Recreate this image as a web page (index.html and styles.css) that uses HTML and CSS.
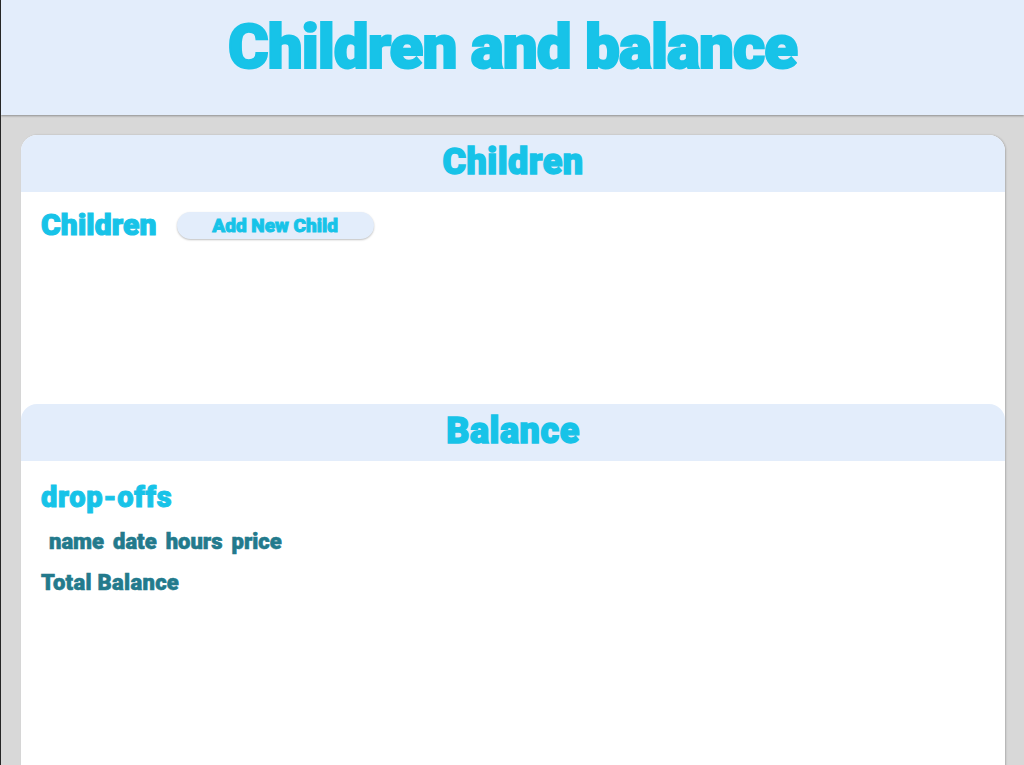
FILE: index.html
```html
<!DOCTYPE html>
<html lang="en">
<head>
<meta charset="utf-8">
<title>Children and balance</title>
<link rel="stylesheet" href="styles.css">
</head>
<body>
<header class="top">
  <h1 class="top-title">Children and balance</h1>
</header>
<main class="main">
  <div class="card">
    <section class="section section-children">
      <h2 class="section-head">Children</h2>
      <div class="section-body">
        <div class="row">
          <h3 class="sub-title">Children</h3>
          <button class="pill-btn" type="button">Add New Child</button>
        </div>
      </div>
    </section>
    <section class="section section-balance">
      <h2 class="section-head">Balance</h2>
      <div class="section-body balance-body">
        <h3 class="drop-title">drop-offs</h3>
        <div class="cols">
          <span class="col">name</span>
          <span class="col">date</span>
          <span class="col">hours</span>
          <span class="col">price</span>
        </div>
        <p class="total">Total Balance</p>
      </div>
    </section>
  </div>
</main>
</body>
</html>
```

FILE: styles.css
```css
html, body {
  margin: 0;
  padding: 0;
}
body {
  background: #d8d8d8;
  border-left: 1px solid #262626;
  font-family: "Roboto Black", Roboto, "Liberation Sans", sans-serif;
  height: 765px;
  overflow: hidden;
  box-sizing: border-box;
}
.top {
  height: 115px;
  box-sizing: border-box;
  background: #e3edfb;
  box-shadow: 0 1px 2px rgba(0, 0, 0, 0.35);
  padding-top: 15px;
  position: relative;
  z-index: 1;
}
.top-title {
  margin: 0;
  text-align: center;
  font-size: 62px;
  line-height: 64px;
  font-weight: 900;
  letter-spacing: -1px;
  -webkit-text-stroke: 2px #17c3e8;
  color: #17c3e8;
}
.main {
  padding: 20px 19px 0 20px;
}
.card {
  background: #fff;
  border-radius: 16px 16px 0 0;
  min-height: 640px;
  box-shadow: 1px 0 2px rgba(0, 0, 0, 0.2);
}
.section-head {
  margin: 0;
  height: 57px;
  box-sizing: border-box;
  background: #e3edfb;
  border-radius: 16px 16px 0 0;
  text-align: center;
  font-size: 36px;
  line-height: 55px;
  font-weight: 900;
  letter-spacing: 0.5px;
  -webkit-text-stroke: 1.4px #17c3e8;
  color: #17c3e8;
}
.section-children {
  height: 269px;
}
.section-body {
  padding: 16px 20px 0 20px;
}
.row {
  display: flex;
  align-items: center;
  gap: 20px;
  height: 34px;
}
.sub-title {
  margin: 0;
  font-size: 30px;
  line-height: 34px;
  font-weight: 900;
  letter-spacing: 0.15px;
  -webkit-text-stroke: 1.2px #17c3e8;
  color: #17c3e8;
}
.pill-btn {
  height: 27px;
  width: 197px;
  padding: 0;
  border: none;
  border-radius: 14px;
  background: #e3edfb;
  box-shadow: 0 1px 2px rgba(0, 0, 0, 0.25);
  font-family: "Roboto Black", Roboto, "Liberation Sans", sans-serif;
  font-size: 19px;
  font-weight: 900;
  -webkit-text-stroke: 0.9px #17c3e8;
  color: #17c3e8;
}
.balance-body {
  padding-top: 21px;
}
.drop-title {
  margin: 0;
  font-size: 29px;
  line-height: 30px;
  font-weight: 900;
  letter-spacing: 0.75px;
  -webkit-text-stroke: 1px #17c3e8;
  color: #17c3e8;
}
.cols {
  display: flex;
  gap: 9px;
  margin-top: 18px;
  padding-left: 8px;
  font-size: 22px;
  line-height: 24px;
  font-weight: 700;
  -webkit-text-stroke: 0.6px #237a8c;
  color: #237a8c;
}
.total {
  margin: 17px 0 0 0;
  font-size: 22px;
  line-height: 24px;
  font-weight: 700;
  letter-spacing: 0.3px;
  -webkit-text-stroke: 0.6px #237a8c;
  color: #237a8c;
}
```
